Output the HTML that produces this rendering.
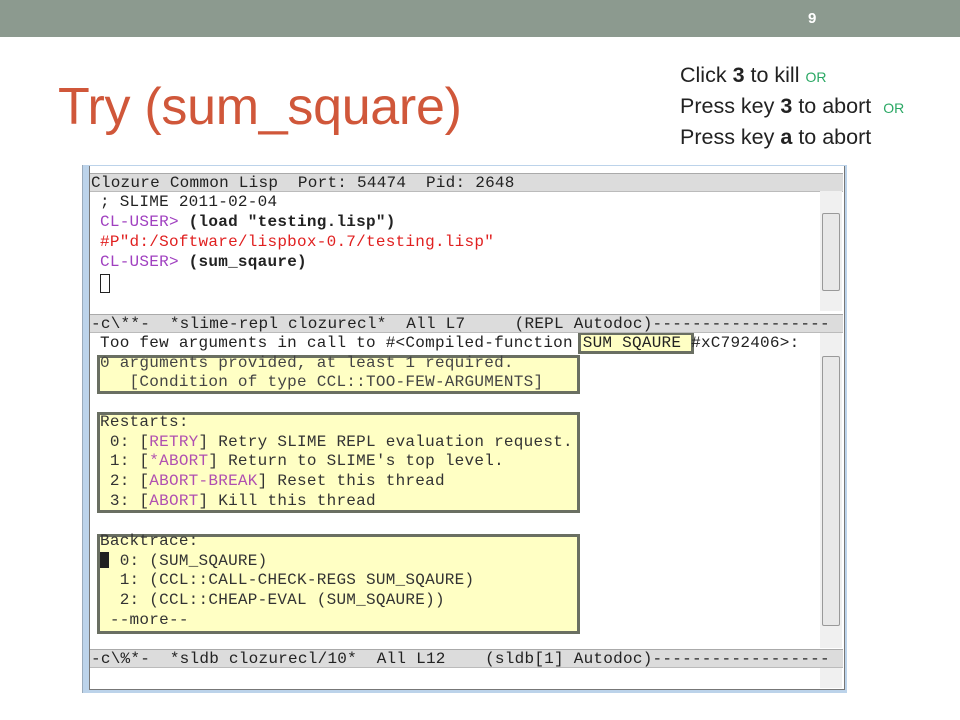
<!DOCTYPE html>
<html><head><style>
body{margin:0;width:960px;height:720px;background:#fff;position:relative;overflow:hidden;font-family:"Liberation Sans",sans-serif}
.bar{position:absolute;left:0;top:0;width:960px;height:37px;background:#8c9a8f}
.num{position:absolute;left:808px;top:10px;color:#fff;font-weight:bold;font-size:15px}
h1{position:absolute;left:58px;top:77px;margin:0;font-weight:normal;font-size:52px;color:#d0573a;letter-spacing:-0.3px}
.note{position:absolute;left:680px;top:61px;font-size:21.5px;color:#222;line-height:29px}
.or{color:#2aa864;font-size:14px}
.win{position:absolute;left:82px;top:165px;width:764px;height:528px;background:#bcd3ea;border-left:1px solid #9ab}
.inner{position:absolute;left:89px;top:166px;width:754px;height:523px;background:#fff;border:1px solid #777;border-top:none}
.m{position:absolute;font-family:"Liberation Mono",monospace;font-size:16px;letter-spacing:0.25px;white-space:pre;color:#222;line-height:18px}
.g{position:absolute;background:#dcdcdc;border-top:1px solid #aaa;border-bottom:1px solid #bbb}
.p{color:#a040c0}.r{color:#e02020}.pk{color:#b050b0}
.box{position:absolute;background:#ffffc4;border:3px solid #6a6f62;box-sizing:border-box}
.sb{position:absolute;background:#f0f0f0}
.th{position:absolute;background:#e8e8e8;border:1px solid #999;border-radius:2px}
</style></head><body>
<div class="bar"></div><div class="num">9</div>
<h1>Try (sum_square)</h1>
<div class="note">Click <b>3</b> to kill <span class="or">OR</span><br>Press key <b>3</b> to abort &nbsp;<span class="or">OR</span><br>Press key <b>a</b> to abort</div>
<div class="win"></div>
<div class="inner"></div>
<div class="g" style="left:90px;top:173px;width:753px;height:17px"></div>
<div class="sb" style="left:820px;top:191px;width:22px;height:120px"></div>
<div class="th" style="left:822px;top:213px;width:16px;height:76px"></div>
<div class="box" style="left:97px;top:355px;width:483px;height:39px"></div>
<div class="box" style="left:97px;top:412px;width:483px;height:101px"></div>
<div class="box" style="left:97px;top:534px;width:483px;height:100px"></div>
<div class="box" style="left:578px;top:332px;width:116px;height:22px"></div>
<div class="g" style="left:90px;top:314px;width:753px;height:17px"></div>
<div class="sb" style="left:820px;top:333px;width:22px;height:315px"></div>
<div class="th" style="left:822px;top:356px;width:16px;height:268px"></div>
<div class="g" style="left:90px;top:649px;width:753px;height:17px"></div>
<div class="sb" style="left:820px;top:668px;width:22px;height:20px"></div>
<div class="m" style="left:91px;top:174px">Clozure Common Lisp  Port: 54474  Pid: 2648</div>
<div class="m" style="left:100px;top:192px;line-height:20px">; SLIME 2011-02-04
<span class="p">CL-USER&gt;</span> <b>(load "testing.lisp")</b>
<span class="r">#P"d:/Software/lispbox-0.7/testing.lisp"</span>
<span class="p">CL-USER&gt;</span> <b>(sum_sqaure)</b></div>
<div style="position:absolute;left:100px;top:274px;width:8px;height:17px;border:1.5px solid #222"></div>
<div class="m" style="left:91px;top:315px">-c\**-  *slime-repl clozurecl*  All L7     (REPL Autodoc)------------------</div>
<div class="m" style="left:100px;top:334px">Too few arguments in call to #&lt;Compiled-function SUM SQAURE #xC792406&gt;:</div>
<div class="m" style="left:100px;top:354px;color:#444;line-height:19px">0 arguments provided, at least 1 required.
   [Condition of type CCL::TOO-FEW-ARGUMENTS]</div>
<div class="m" style="left:100px;top:413px;color:#333;line-height:19.7px">Restarts:
 0: [<span class="pk">RETRY</span>] Retry SLIME REPL evaluation request.
 1: [<span class="pk">*ABORT</span>] Return to SLIME's top level.
 2: [<span class="pk">ABORT-BREAK</span>] Reset this thread
 3: [<span class="pk">ABORT</span>] Kill this thread</div>
<div class="m" style="left:100px;top:532px;color:#333;line-height:19.7px">Backtrace:
  0: (SUM_SQAURE)
  1: (CCL::CALL-CHECK-REGS SUM_SQAURE)
  2: (CCL::CHEAP-EVAL (SUM_SQAURE))
 --more--</div>
<div style="position:absolute;left:100px;top:552px;width:9px;height:16px;background:#222"></div>
<div class="m" style="left:91px;top:650px">-c\%*-  *sldb clozurecl/10*  All L12    (sldb[1] Autodoc)------------------</div>
</body></html>
